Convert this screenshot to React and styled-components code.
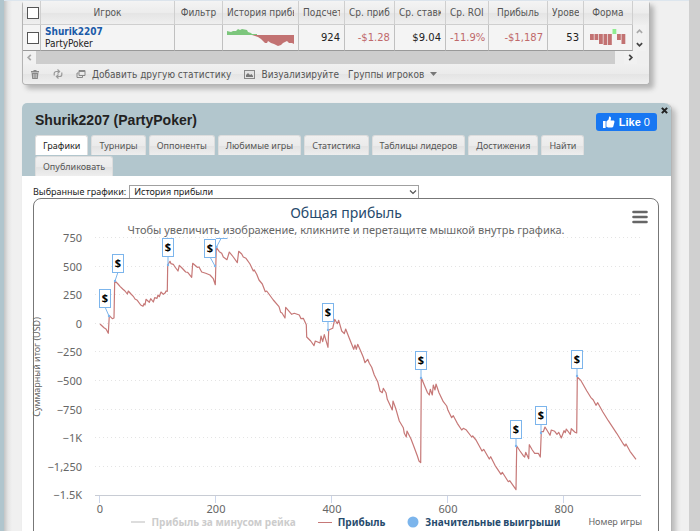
import React, { useState } from 'react';
import styled, { createGlobalStyle } from 'styled-components';

const GlobalStyle = createGlobalStyle`
  * {
    box-sizing: border-box;
  }

  body {
    margin: 0;
    background: #d0d0d0;
    font-family: 'DejaVu Sans', sans-serif;
    font-size: 10px;
    color: #222;
  }

  button, select {
    font: inherit;
    color: inherit;
    cursor: pointer;
  }
`;

const Screen = styled.div`
  height: 100vh;
  overflow: hidden;
  padding: 0 11px 0 4px;
  background: linear-gradient(90deg, #b0c5cd 4px, #d0d0d0 4px);
`;

const Page = styled.main`
  min-height: 100%;
  padding: 0 17px 0 18px;
  border-top: 1px solid #dde6ee;
  background: linear-gradient(90deg, #c4c4c4, #e4e4e4 4px, #f0f0f0 8px);
`;

const TrackedPanel = styled.section`
  margin-right: 22px;
  border: 1px solid #b4b4b4;
  border-top: 0;
  border-radius: 4px;
  background: #efefef;
  box-shadow: 4px 4px 5px #b5b5b5;
`;

const TableArea = styled.div`
  display: flex;
`;

const Table = styled.table`
  flex: 1;
  width: 0;
  table-layout: fixed;
  border-collapse: separate;
  border-spacing: 0;
`;

const Th = styled.th`
  height: 24px;
  padding: 0 4px;
  border-right: 1px solid #cfcfcf;
  border-bottom: 1px solid #cfcfcf;
  background: linear-gradient(#f4f4f4, #ececec 50%, #e4e4e4 51%, #efefef);
  color: #555;
  font-family: 'DejaVu Sans Condensed', 'DejaVu Sans', sans-serif;
  font-weight: normal;
  text-align: ${(p) => p.$align || 'center'};
`;

const ThLabel = styled.div`
  overflow: hidden;
  white-space: nowrap;
`;

const Td = styled.td`
  height: 25px;
  padding: 0 4px;
  border-right: 1px solid #c0c0c0;
  border-bottom: 1px solid #999;
  background: #f4f4f4;
  color: ${(p) => (p.$loss ? '#c0696b' : '#222')};
  text-align: right;
  white-space: nowrap;
  line-height: 12px;
`;

const PlayerCell = styled(Td)`
  text-align: left;
  font-family: 'DejaVu Sans Condensed', 'DejaVu Sans', sans-serif;
`;

const PlayerLink = styled.a`
  display: block;
  color: #1a5ba8;
  font-weight: bold;
  text-decoration: none;
`;

const Check = styled.input`
  appearance: none;
  display: block;
  width: 12px;
  height: 12px;
  margin: 0 auto;
  border: 1px solid #555;
  background: #fff;

  &:checked {
    background: #555;
  }
`;

const RowScroll = styled.div`
  display: flex;
  flex-direction: column;
  width: 16px;
  padding-top: 24px;
  background: linear-gradient(#f4f4f4, #ececec 12px, #e4e4e4 13px, #efefef 24px);
`;

const ArrowButton = styled.button`
  display: flex;
  align-items: center;
  justify-content: center;
  width: 13px;
  height: 13px;
  padding: 0;
  border: 0;
  background: #f1f1f1;
  color: ${(p) => (p.$dim ? '#a8a8a8' : '#444')};
`;

const SideScroll = styled.div`
  display: flex;
  align-items: center;
  justify-content: space-between;
  padding-right: 12px;
`;

const Thumb = styled.div`
  flex: 1;
  height: 13px;
  margin-right: 9px;
  background: #cdcdcd;
`;

const Toolbar = styled.div`
  display: flex;
  align-items: center;
  gap: 13px;
  height: 20px;
  padding-left: 7px;
  border-radius: 0 0 4px 4px;
  background: linear-gradient(#f0f0f0, #ebebeb 50%, #e4e4e4 51%, #efefef);
  font-family: 'DejaVu Sans Condensed', 'DejaVu Sans', sans-serif;
`;

const ToolButton = styled.button`
  display: flex;
  align-items: center;
  gap: 6px;
  padding: 0;
  border: 0;
  background: none;
  color: #555;
  white-space: nowrap;
`;

const ToolPair = styled.div`
  display: flex;
  align-items: center;
  gap: 9px;
`;

const Profile = styled.section`
  position: relative;
  margin-top: 18px;
  border-right: 1px solid #b5b5b5;
  border-radius: 5px 7px 0 0;
  background: #fff;
  box-shadow: 4px 4px 5px #bdbdbd;
`;

const ProfileHead = styled.header`
  padding: 10px 14px 0 13px;
  border-radius: 5px 7px 0 0;
  background: #b2c6cd;
`;

const TitleRow = styled.div`
  display: flex;
  align-items: center;
  justify-content: space-between;
  height: 18px;
  margin-bottom: 4px;
`;

const Title = styled.h1`
  margin: 0;
  font-family: 'Liberation Sans', sans-serif;
  font-size: 14px;
  line-height: 14px;
  padding-bottom: 4px;
`;

const LikeButton = styled.button`
  display: flex;
  align-items: center;
  gap: 4px;
  height: 18px;
  padding: 0 7px;
  border: 0;
  border-radius: 3px;
  background: #1877f2;
  color: #fff;
  font-family: 'Liberation Sans', sans-serif;
  font-size: 11px;
`;

const CloseButton = styled.button`
  position: absolute;
  top: 4px;
  right: 3px;
  display: flex;
  padding: 0;
  border: 0;
  background: none;
`;

const Tabs = styled.nav`
  display: flex;
  flex-wrap: wrap;
  gap: 1px 3px;
`;

const Tab = styled.button`
  height: 20px;
  padding: 0 7px;
  border: 1px solid #ddd;
  border-bottom: 0;
  border-radius: 3px 3px 0 0;
  background: ${(p) => (p.$active ? '#fff' : 'linear-gradient(#f0f0f0, #ebebeb 50%, #e2e2e2 51%, #eee)')};
  color: ${(p) => (p.$active ? '#222' : '#555')};
  font-family: 'Noto Sans', sans-serif;
  font-size: 9px;
  line-height: 18px;
`;

const ProfileBody = styled.div`
  padding: 9px 12px 0 11px;
`;

const SelectRow = styled.div`
  display: flex;
  align-items: center;
  gap: 3px;
  height: 13px;
  font-family: 'Noto Sans', sans-serif;
  font-size: 9px;
`;

const SelectWrap = styled.div`
  position: relative;
  width: 290px;
  height: 13px;
  color: #555;

  svg {
    position: absolute;
    top: 3px;
    right: 2px;
    pointer-events: none;
  }
`;

const Select = styled.select`
  appearance: none;
  display: block;
  width: 100%;
  height: 13px;
  padding: 0 4px;
  border: 1px solid #a0a0a0;
  border-bottom: 0;
  border-radius: 0;
  background: #fff;
  color: #222;
  line-height: 12px;
`;

const ChartFrame = styled.figure`
  position: relative;
  margin: 0;
  padding-top: 5px;
  height: 400px;
  border: 1px solid #777;
  border-radius: 8px;
  font-family: 'Noto Sans', sans-serif;
`;

const ChartTitle = styled.h2`
  margin: 0;
  color: #274b6d;
  font-size: 14px;
  font-weight: normal;
  line-height: 18px;
  text-align: center;
`;

const ChartHint = styled.p`
  margin: 0;
  color: #666;
  font-size: 11px;
  line-height: 15px;
  text-align: center;
`;

const MenuButton = styled.button`
  position: absolute;
  top: 11px;
  right: 10px;
  display: flex;
  padding: 0;
  border: 0;
  background: none;
`;

const Plot = styled.svg`
  display: block;
  width: 100%;
  overflow: visible;
`;

const LegendRow = styled.figcaption`
  display: grid;
  grid-template-columns: 1fr auto 1fr;
  align-items: center;
  height: 14px;
  padding: 0 16px;
`;

const Legend = styled.div`
  display: flex;
  grid-column: 2;
  gap: 22px;
`;

const LegendItem = styled.button`
  display: flex;
  align-items: center;
  gap: 6px;
  padding: 0;
  border: 0;
  background: none;
  color: ${(p) => (p.$off ? '#ccc' : '#274b6d')};
  font-size: 10px;
  font-weight: bold;
  line-height: 14px;
  white-space: nowrap;
`;

const AxisTitle = styled.span`
  color: #666;
  font-size: 9px;
  line-height: 14px;
  text-align: right;
  white-space: nowrap;
`;

const columns = [
  { label: 'Игрок', width: 134 },
  { label: 'Фильтр', width: 48 },
  { label: 'История прибыли', width: 76, align: 'left' },
  { label: 'Подсчет', width: 46, align: 'left' },
  { label: 'Ср. прибыль', width: 50, align: 'left' },
  { label: 'Ср. ставка', width: 51, align: 'left' },
  { label: 'Ср. ROI', width: 43, align: 'left' },
  { label: 'Прибыль', width: 59 },
  { label: 'Уровень', width: 36, align: 'left' },
  { label: 'Форма', width: 49 },
];

const tabs = [
  'Графики',
  'Турниры',
  'Оппоненты',
  'Любимые игры',
  'Статистика',
  'Таблицы лидеров',
  'Достижения',
  'Найти',
  'Опубликовать',
];

const yTicks = ['750', '500', '250', '0', '−250', '−500', '−750', '−1K', '−1,250', '−1.5K'];
const xTicks = ['0', '200', '400', '600', '800'];

const profitLine = `
  100,324 104,327.7 106,329 108.3,333.3 109.3,315.7 112.3,318.7 114,318 114.7,280.7 118,284 120,286.3 122.7,289
  125,291 127.3,294 128.3,291 131,294 133.3,296.3 135,299 137.3,300.3 140.7,305 143,306.3 144,303.7 145,305 146,299.3
  149.3,302.3 150.7,298.7 153.3,302 154.7,297.7 157,298.3 158,295 159.3,296.7 161,292 163.3,294.3 165.3,292.7
  166,291 167.3,291.3 167.7,265 170,261.3 171,263.7 173.3,264.3 175,267 178,271 179.3,265.3 182,268 185.7,272
  187.7,272.3 191.7,277.3 192.7,263.3 197.3,267.3 199,267 201.7,272 205.7,273.3 210,275 213.3,278.7 215.3,284.7
  216.3,247.3 219.3,251.7 221.7,253.3 223.3,257 227,259.7 229.3,252 233.3,257 237.3,262.7 238.7,251.3 241.7,254
  243.3,257 246,258.3 250,264 253.3,271 254.3,270 256.7,274.3 259,280 262.3,284 265.3,291.7 266.7,291 273.3,300
  279,306.7 280.7,312.3 282,313 285,318 285.7,307.3 291.7,314.3 294.3,313.3 299.3,315 301,318.7 303.3,318.3
  306.3,324.7 306.7,337 310.7,341 314,345.7 315.3,341 320,343 321,336 322.7,341.7 324.3,334.7 328,347.3 328.7,330
  332.7,328.3 334.7,319.3 337.3,323.7 338.7,320.3 341.7,331 344.3,333.7 345.7,329 349.3,338.3 353.7,349.3 355,345
  356.3,349.3 357.7,344.3 361,351.7 363.3,357.3 365,362.7 367.7,359.3 369.3,363.3 371.7,367.3 374.3,375 377.7,381.7
  380,391 382.3,392.7 383.3,388.3 386,392.7 387.3,399.3 392.3,410 393,401 396,409.3 399.3,421 403.3,427.7
  404.3,433.3 406.3,437 407,431 411,439 413.3,445 417.3,455.7 419,461 420.7,462.7 421.3,377.7 425,386.7
  427.3,392.3 429.3,395 430.3,389.3 432.3,395 433.3,385 435,390 436,384 439,392.7 443.3,401.7 446.7,406 448,410.3
  451.7,417.7 453.3,415.7 457.3,423.3 461.7,430 463.3,428.3 466,429.7 471.7,437 472.7,436 476,440 482,451
  483.7,449.3 489.3,459 490.7,456.7 495,465.3 501,474.3 502.3,472.3 508.3,481.7 509.7,480.7 516,489.7 516.7,446
  520,451 523.3,455.7 524.7,457 525.7,452.3 528.7,458.7 529.3,444.7 532.3,450 534.7,453.3 538.3,453.3 540.3,457
  541.3,431.7 543.3,431.7 545,427 547.3,430.7 550,435.3 551.3,430 554.7,431.3 557,434.3 558.7,432.3 561.3,438
  564,430.7 565.3,432.7 566.3,429 570.3,434.3 571.3,428.7 575,432.3 576.7,433 577.3,377 581,380.7 586.7,390.7
  590.7,397.3 593.3,400 596,405.3 597.7,402.7 602.7,411.7 608.3,420.7 616.7,433.3 623.3,444 625,446 626,444
  630,451.3 636,459.3`;

// left, top of the flag, then the point of its pole
const flags = [
  [99, 289, 109, 316],
  [112, 254, 115, 281],
  [162, 238, 168, 265],
  [204, 239, 215, 266],
  [322, 303, 328, 330],
  [415, 351, 421, 378],
  [510, 420, 516, 446],
  [535, 406, 541, 433],
  [571, 350, 577, 376],
];

const Chevron = ({ turn = 0, size = 7, width = 2 }) => (
  <svg width={size} height={size} viewBox="0 0 8 8" fill="none" stroke="currentColor" strokeWidth={width}>
    <path d="M1 2.5 L4 5.5 L7 2.5" transform={`rotate(${turn} 4 4)`} />
  </svg>
);

const Drawing = styled.svg`
  display: block;
`;

const Sparkline = () => (
  <Drawing width="67" height="18" viewBox="0 0 67 18">
    <path d="M0 6V2L4 3L6 2H9L11 0L13 1L15 0L20 1L21 3L24 4L25 5H30V6Z" fill="#7cc67c" />
    <path d="M25 6H67V15L65 14H62L60 12L56 14L54 16L51 17L47 15L44 14L41 12L40 14H38L34 10L31 8L28 7Z" fill="#c27272" />
  </Drawing>
);

const form = [6, 6, 10, 11, 11, -5, 6, 10];

const FormBars = () => (
  <Drawing width="38" height="18" viewBox="0 0 38 18">
    {form.map((v, i) => (
      <rect
        key={i}
        x={2 + i * 4.5}
        y={v < 0 ? 0 : 5}
        width="3.8"
        height={Math.abs(v)}
        fill={v < 0 ? '#90ee90' : '#c27272'}
      />
    ))}
  </Drawing>
);

const TrackedPlayers = () => (
  <TrackedPanel>
    <TableArea>
      <Table>
        <colgroup>
          <col style={{ width: 18 }} />
          {columns.map((c) => (
            <col key={c.label} style={{ width: c.width }} />
          ))}
        </colgroup>
        <thead>
          <tr>
            <Th><Check type="checkbox" aria-label="Все игроки" /></Th>
            {columns.map((c) => (
              <Th key={c.label} $align={c.align}><ThLabel>{c.label}</ThLabel></Th>
            ))}
          </tr>
        </thead>
        <tbody>
          <tr>
            <Td><Check type="checkbox" aria-label="Shurik2207" /></Td>
            <PlayerCell>
              <PlayerLink href="#player">Shurik2207</PlayerLink>
              PartyPoker
            </PlayerCell>
            <Td />
            <Td><Sparkline /></Td>
            <Td>924</Td>
            <Td $loss>-$1.28</Td>
            <Td>$9.04</Td>
            <Td $loss>-11.9%</Td>
            <Td $loss>-$1,187</Td>
            <Td>53</Td>
            <Td><FormBars /></Td>
          </tr>
        </tbody>
      </Table>
      <RowScroll>
        <ArrowButton $dim aria-label="Вверх"><Chevron turn={180} /></ArrowButton>
        <ArrowButton aria-label="Вниз"><Chevron /></ArrowButton>
      </RowScroll>
    </TableArea>
    <SideScroll>
      <ArrowButton $dim aria-label="Влево"><Chevron turn={90} /></ArrowButton>
      <Thumb />
      <ArrowButton aria-label="Вправо"><Chevron turn={-90} /></ArrowButton>
    </SideScroll>
    <Toolbar>
      <ToolButton aria-label="Удалить">
        <svg width="10" height="10" viewBox="0 0 10 10" fill="#888">
          <path d="M1 2H3.5V1H6.5V2H9V3.4H1Z M1.6 4H8.4L7.8 10H2.2Z" />
          <path d="M3.6 5V9 M5 5V9 M6.4 5V9" stroke="#ddd" strokeWidth="0.6" />
        </svg>
      </ToolButton>
      <ToolButton aria-label="Обновить">
        <svg width="10" height="10" viewBox="0 0 10 10" fill="none" stroke="#999" strokeWidth="1.2">
          <path d="M1.2 6.5V4.5A2 2 0 0 1 3.2 2.5H6 M4.5 0.5L6.6 2.5L4.5 4.5 M8.8 3.5V5.5A2 2 0 0 1 6.8 7.5H4 M5.5 5.5L3.4 7.5L5.5 9.5" />
        </svg>
      </ToolButton>
      <ToolButton>
        <svg width="10" height="10" viewBox="0 0 10 10" fill="none" stroke="#888">
          <path d="M3 1.5H9V6.5H3Z M3 2.5H9 M2.5 4H1V8.5H6.5V7" />
        </svg>
        Добавить другую статистику
      </ToolButton>
      <ToolPair>
        <ToolButton>
          <svg width="11" height="9" viewBox="0 0 11 9">
            <rect x="0.5" y="0.5" width="10" height="8" fill="#e4e4e4" stroke="#888" />
            <path d="M2 7V5L4 3L6 5L7.5 4L9 6V7Z" fill="#777" />
          </svg>
          Визуализируйте
        </ToolButton>
        <ToolButton>
          Группы игроков
          <svg width="7" height="4" viewBox="0 0 7 4" fill="#777"><path d="M0 0H7L3.5 4Z" /></svg>
        </ToolButton>
      </ToolPair>
    </Toolbar>
  </TrackedPanel>
);

const ProfitChart = () => (
  <ChartFrame>
    <ChartTitle>Общая прибыль</ChartTitle>
    <ChartHint>Чтобы увеличить изображение, кликните и перетащите мышкой внутрь графика.</ChartHint>
    <MenuButton aria-label="Меню графика">
      <svg width="16" height="14" viewBox="0 0 16 14" stroke="#666" strokeWidth="2.6" strokeLinecap="round">
        <path d="M1.5 2H14.5 M1.5 7H14.5 M1.5 12H14.5" />
      </svg>
    </MenuButton>
    <Plot viewBox="34 237 624 278" fontFamily="'Noto Sans', sans-serif">
      {yTicks.map((t, i) => {
        const y = Math.round(238 + i * 28.6);
        return (
          <g key={t}>
            {i < 9 && <line x1="95" x2="641" y1={y - 0.5} y2={y - 0.5} stroke="#e4e4e4" strokeDasharray="1 3" />}
            <text x="82" y={y + 4} fill="#666" fontSize="11" textAnchor="end">{t}</text>
          </g>
        );
      })}
      <line x1="95" x2="641" y1="495.5" y2="495.5" stroke="#c8ccd4" />
      {xTicks.map((t, i) => (
        <g key={t}>
          <line x1={99.5 + i * 116} x2={99.5 + i * 116} y1="496" y2="503" stroke="#ccd6eb" />
          <text x={100 + i * 116} y="513" fill="#666" fontSize="11" textAnchor="middle">{t}</text>
        </g>
      ))}
      <text transform="translate(40 367) rotate(-90)" fill="#666" fontSize="9" textAnchor="middle">
        Суммарный итог (USD)
      </text>
      <polyline points={profitLine} fill="none" stroke="#c67877" strokeWidth="1.2" strokeLinejoin="round" />
      <path d="M216 238.5H227.5 M221 238.5L216.5 247" fill="none" stroke="#7cb5ec" />
      <circle cx="216.5" cy="247" r="1.2" fill="#7cb5ec" />
      {flags.map(([x, y, px, py]) => (
        <g key={x}>
          <line x1={x + 6} y1={y + 18} x2={px} y2={py} stroke="#7cb5ec" />
          <circle cx={px} cy={py} r="1.2" fill="#7cb5ec" />
          <rect x={x + 0.5} y={y + 0.5} width="11" height="18" fill="#fff" stroke="#7cb5ec" />
          <text x={x + 6} y={y + 13} fill="#000" fontSize="11" fontWeight="bold" textAnchor="middle">$</text>
        </g>
      ))}
    </Plot>
    <LegendRow>
      <Legend>
        <LegendItem $off>
          <svg width="14" height="2"><rect width="14" height="2" fill="#ddd" /></svg>
          Прибыль за минусом рейка
        </LegendItem>
        <LegendItem>
          <svg width="14" height="1"><rect width="14" height="1" fill="#c67877" /></svg>
          Прибыль
        </LegendItem>
        <LegendItem>
          <svg width="12" height="12"><circle cx="6" cy="6" r="5.5" fill="#7cb5ec" /></svg>
          Значительные выигрыши
        </LegendItem>
      </Legend>
      <AxisTitle>Номер игры</AxisTitle>
    </LegendRow>
  </ChartFrame>
);

const App = () => {
  const [active, setActive] = useState('Графики');

  return (
    <Screen>
      <GlobalStyle />
      <Page>
        <TrackedPlayers />
        <Profile>
          <ProfileHead>
            <TitleRow>
              <Title>Shurik2207 (PartyPoker)</Title>
              <LikeButton>
                <svg width="12" height="12" viewBox="0 0 12 12" fill="#fff">
                  <path d="M0 5H2.6V12H0Z M3.4 5.4L5.6 3.4L6.2 0.6Q8.2 0.4 8 2.6L7.6 4.6H10.6Q11.8 4.8 11.4 6.2L10.2 10.8Q9.8 11.6 9 11.6H5.2L3.4 10.8Z" />
                </svg>
                <span><b>Like</b> 0</span>
              </LikeButton>
            </TitleRow>
            <Tabs>
              {tabs.map((t) => (
                <Tab key={t} $active={t === active} onClick={() => setActive(t)}>{t}</Tab>
              ))}
            </Tabs>
          </ProfileHead>
          <CloseButton aria-label="Закрыть">
            <svg width="7" height="7" viewBox="0 0 8 8" stroke="#222" strokeWidth="2.4">
              <path d="M1 1L7 7 M7 1L1 7" />
            </svg>
          </CloseButton>
          <ProfileBody>
            <SelectRow>
              <label htmlFor="graph">Выбранные графики:</label>
              <SelectWrap>
                <Select id="graph" defaultValue="profit">
                  <option value="profit">История прибыли</option>
                </Select>
                <Chevron size={8} width={1.2} />
              </SelectWrap>
            </SelectRow>
            <ProfitChart />
          </ProfileBody>
        </Profile>
      </Page>
    </Screen>
  );
};

export default App;
